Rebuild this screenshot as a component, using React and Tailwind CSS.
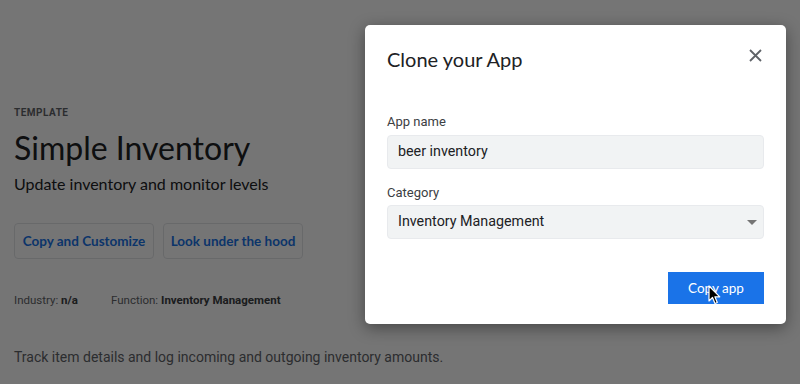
import React from "react";

function Cursor() {
  return (
    <svg width="14" height="20" viewBox="0 0 14 20" className="absolute left-[708px] top-[285px]">
      <path d="M1 1 L1 16 L4.5 12.5 L7 18.5 L9.3 17.5 L6.9 11.8 L11.8 11.8 Z" fill="#000" stroke="#fff" strokeWidth="1.2" strokeLinejoin="round" />
    </svg>
  );
}

const gs = { fontFamily: "Lato, 'Open Sans', sans-serif" };

export default function App() {
  return (
    <div className="relative w-[800px] h-[384px] overflow-hidden bg-white" style={{ fontFamily: "Roboto, 'Liberation Sans', sans-serif" }}>
      <div className="flex flex-col pl-[14px] pt-[106px]">
        <div className="text-[10px] leading-[14px] font-bold tracking-[0.05em] text-[#5f6368]">TEMPLATE</div>
        <div className="mt-[9px] text-[32px] leading-[38px] text-[#202124]" style={gs}>Simple Inventory</div>
        <div className="mt-[6px] text-[16px] leading-[22px] text-[#202124]" style={gs}>Update inventory and monitor levels</div>
        <div className="mt-[28px] flex gap-[9px]">
          <button className="h-[36px] w-[140px] border border-[#e3e5e8] rounded-[4px] text-[13.5px] font-bold text-[#1a73e8]" style={gs}>Copy and Customize</button>
          <button className="h-[36px] w-[140px] border border-[#e3e5e8] rounded-[4px] text-[13.5px] font-bold text-[#1a73e8]" style={gs}>Look under the hood</button>
        </div>
        <div className="mt-[33px] flex gap-[33px] text-[11.5px] leading-[16px] text-[#5f6368]">
          <span>Industry: <b className="text-[#3c4043]">n/a</b></span>
          <span>Function: <b className="text-[#3c4043]">Inventory Management</b></span>
        </div>
        <div className="mt-[39px] text-[14px] leading-[20px] text-[#5f6368]">Track item details and log incoming and outgoing inventory amounts.</div>
      </div>

      <div className="absolute inset-0 bg-black/[0.54]" />

      <div className="absolute left-[365px] top-[25px] w-[421px] h-[299px] bg-white rounded-[5px] shadow-[0_4px_16px_rgba(0,0,0,0.4)] flex flex-col pl-[22px] pr-[22px]">
        <div className="flex items-center justify-between pt-[20px]">
          <div className="text-[20px] leading-[28px] text-[#202124]" style={gs}>Clone your App</div>
          <svg width="13" height="13" viewBox="0 0 13 13" className="mr-[2px] mt-[-8px]">
            <path d="M1 1 L12 12 M12 1 L1 12" stroke="#5f6368" strokeWidth="1.8" />
          </svg>
        </div>
        <div className="mt-[40px] text-[13px] leading-[18px] text-[#3c4043]">App name</div>
        <div className="mt-[4px] h-[34px] bg-[#f1f3f4] border border-[#e8eaed] rounded-[4px] flex items-center px-[10px] text-[14.3px] text-[#202124]">beer inventory</div>
        <div className="mt-[15px] text-[13px] leading-[18px] text-[#3c4043]">Category</div>
        <div className="mt-[3px] h-[34px] bg-[#f1f3f4] border border-[#e8eaed] rounded-[4px] flex items-center justify-between pl-[10px] pr-[6px] text-[14.3px] text-[#202124]">
          <span>Inventory Management</span>
          <svg width="10" height="5" viewBox="0 0 10 5"><path d="M0 0 L10 0 L5 5 Z" fill="#757575" /></svg>
        </div>
        <div className="mt-[33px] flex justify-end">
          <button className="h-[32px] w-[96px] bg-[#1a73e8] text-white text-[13.5px]" style={gs}>Copy app</button>
        </div>
      </div>
      <Cursor />
    </div>
  );
}
